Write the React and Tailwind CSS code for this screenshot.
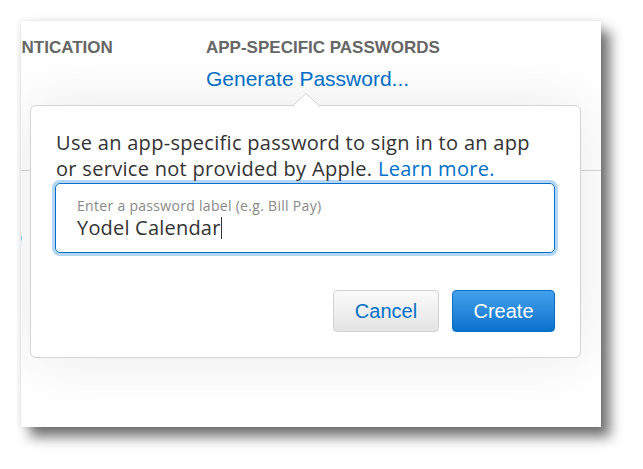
import React from "react";

const PopoverArrow = () => (
  <svg
    className="absolute left-[261px] top-[-13px]"
    width="28"
    height="14"
    viewBox="0 0 28 14"
  >
    <path d="M0 14 L14 0.5 L28 14 Z" fill="#ffffff" />
    <path d="M0 13.5 L14 0.5 L28 13.5" fill="none" stroke="#d4d4d4" strokeWidth="1" />
  </svg>
);

const GeneratePopover = () => (
  <div className="absolute left-[9px] top-[84px] w-[551px] h-[253px] bg-white border border-[#d4d4d4] rounded-[6px] shadow-[0_0_60px_rgba(0,0,0,0.09)] px-[24px] pt-[24px] font-['Open_Sans',sans-serif]">
    <PopoverArrow />
    <p className="pl-[1px] text-[20px] leading-[26px] tracking-[0.3px] text-[#333333] whitespace-nowrap">
      Use an app-specific password to sign in to an app
      <br />
      or service not provided by Apple.{" "}
      <span className="text-[#0070c9]">Learn more.</span>
    </p>

    {/* password label field */}
    <div className="mt-[1px] w-[500px] h-[70px] border border-[#0070c9] rounded-[5px] shadow-[0_0_0_3px_#b3d6f6] pl-[21px] pt-[13px]">
      <div className="text-[14px] leading-[18px] tracking-[0.3px] text-[#888888]">
        Enter a password label (e.g. Bill Pay)
      </div>
      <div className="flex items-center text-[20px] leading-[26px] tracking-[0.2px] text-[#333333]">
        Yodel Calendar
        <span className="w-px h-[22px] bg-[#333333]" />
      </div>
    </div>

    <div className="mt-[37px] w-[500px] flex justify-end gap-[13px] font-['Liberation_Sans',Arial,sans-serif]">
      <button className="w-[106px] h-[42px] rounded-[4px] border border-[#d2d2d2] bg-gradient-to-b from-[#fbfbfb] to-[#e4e4e4] text-[20px] text-[#0070c9]">
        Cancel
      </button>
      <button className="w-[103px] h-[42px] rounded-[4px] border border-[#0a6fc4] bg-gradient-to-b from-[#42a1ec] to-[#0671cb] text-[20px] text-white">
        Create
      </button>
    </div>
  </div>
);

export default function App() {
  return (
    <div className="w-[643px] h-[469px] bg-white pt-[21px] pl-[21px]">
      <div className="relative w-[580px] h-[406px] overflow-hidden bg-white shadow-[9px_10px_12px_rgba(0,0,0,0.55),0_0_6px_rgba(0,0,0,0.12)] font-['Liberation_Sans',Arial,sans-serif]">
        <div className="flex pt-[17px]">
          <div className="w-[243px] ml-[-58px] shrink-0">
            <div className="text-[17px] leading-[20px] font-bold text-[#666666]">AUTHENTICATION</div>
          </div>
          <div>
            <div className="text-[17px] leading-[20px] font-bold text-[#666666]">APP-SPECIFIC PASSWORDS</div>
            <div className="mt-[9px] text-[21px] leading-[24px] text-[#0070c9]">Generate Password...</div>
          </div>
        </div>

        <div className="mt-[79px] border-t border-[#d6d6d6]" />

        <div className="mt-[56px] ml-[-12px] text-[15px] leading-[20px] text-[#555555]">
          o)
        </div>

        <GeneratePopover />
      </div>
    </div>
  );
}
